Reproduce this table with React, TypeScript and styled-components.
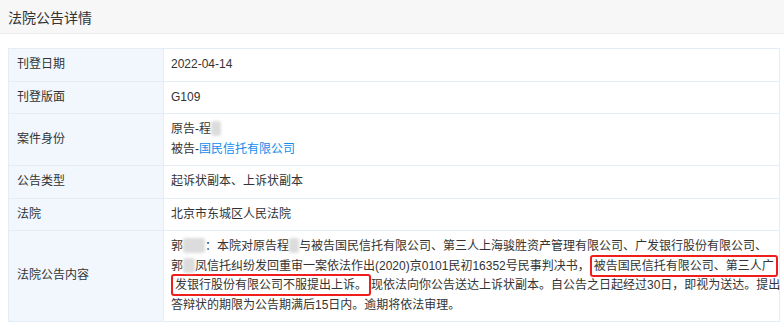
import styled, { createGlobalStyle } from "styled-components";

const GlobalStyle = createGlobalStyle`
  body {
    margin: 0;
    background: #fff;
    font-family: "Liberation Sans", Arial, "Noto Sans CJK SC", sans-serif;
  }
`;

type Row = { label: string; value: React.ReactNode };

function App() {
  const rows: Row[] = [
    { label: "刊登日期", value: "2022-04-14" },
    { label: "刊登版面", value: "G109" },
    {
      label: "案件身份",
      value: (
        <>
          原告-程<Masked $w={10} />
          <br />
          被告-<Link>国民信托有限公司</Link>
        </>
      ),
    },
    { label: "公告类型", value: "起诉状副本、上诉状副本" },
    { label: "法院", value: "北京市东城区人民法院" },
    {
      label: "法院公告内容",
      value: (
        <Notice>
          郭<Masked $w={22} />：本院对原告程<Masked $w={10} />与被告国民信托有限公司、第三人上海骏胜资产管理有限公司、广发银行股份有限公司、
          <br />
          郭<Masked $w={12} />凤信托纠纷发回重审一案依法作出(2020)京0101民初16352号民事判决书，
          <Marked>
            被告国民信托有限公司、第三人广
            <br />
            发银行股份有限公司不服提出上诉。
          </Marked>
          现依法向你公告送达上诉状副本。自公告之日起经过30日，即视为送达。提出
          <br />
          答辩状的期限为公告期满后15日内。逾期将依法审理。
        </Notice>
      ),
    },
  ];

  return (
    <>
      <GlobalStyle />
      <Page>
        <Header>
          <Title>法院公告详情</Title>
        </Header>
        <Body>
          <Table>
            <tbody>
              {rows.map((r) => (
                <tr key={r.label}>
                  <LabelCell>{r.label}</LabelCell>
                  <ValueCell>{r.value}</ValueCell>
                </tr>
              ))}
            </tbody>
          </Table>
        </Body>
      </Page>
    </>
  );
}

export default App;

const Page = styled.div`
  width: 784px;
  height: 334px;
  overflow: hidden;
  background: #fff;
`;

const Header = styled.div`
  height: 33px;
  display: flex;
  align-items: center;
  padding: 0 8px;
  background: #f7f7f7;
  border-bottom: 1px solid #ececec;
`;

const Title = styled.h2`
  margin: 0;
  font-size: 14px;
  font-weight: normal;
  color: #333;
`;

const Body = styled.div`
  padding: 14px 4px 0 8px;
`;

const Table = styled.table`
  width: 772px;
  border-collapse: collapse;
  table-layout: fixed;
  font-size: 12px;
  color: #333;
  line-height: 19.5px;

  td {
    border: 1px solid #e4edf5;
    padding: 6px 8px;
  }
`;

const LabelCell = styled.td`
  width: 138px;
  background: #f1f7fd;
  vertical-align: middle;
`;

const ValueCell = styled.td`
  background: #fff;
  padding-left: 7px !important;
`;

const Link = styled.span`
  color: #128bed;
`;

const Masked = styled.span<{ $w: number }>`
  display: inline-block;
  width: ${(p) => p.$w}px;
  height: 15px;
  vertical-align: -3px;
  background: #dcdcdc;
  border-radius: 3px;
  filter: blur(1.5px);
`;

const Notice = styled.div`
  white-space: nowrap;
`;

const Marked = styled.span`
  border: 2px solid #f01d1d;
  border-radius: 3px;
  padding: 2px 2px;
  -webkit-box-decoration-break: clone;
  box-decoration-break: clone;
`;
